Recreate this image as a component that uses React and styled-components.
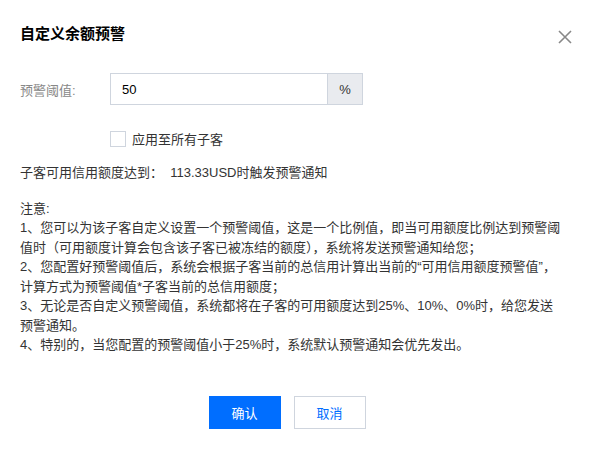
import React, { useState } from "react";
import styled, { createGlobalStyle } from "styled-components";

const GlobalStyle = createGlobalStyle`
  html, body {
    margin: 0;
    padding: 0;
    background: #fff;
  }
  body {
    font-family: "Liberation Sans", "Noto Sans CJK SC", sans-serif;
    color: #333;
  }
`;

const Dialog = styled.div`
  width: 592px;
  height: 463px;
  box-sizing: border-box;
  padding: 24px 20px 0;
  background: #fff;
`;

const Header = styled.div`
  display: flex;
  justify-content: space-between;
  align-items: flex-start;
`;

const Title = styled.h3`
  margin: 0;
  font-size: 15px;
  line-height: 20px;
  font-weight: 700;
  color: #000;
`;

const CloseButton = styled.button`
  margin: 6px 0 0 0;
  padding: 0;
  border: 0;
  background: none;
  width: 14px;
  height: 14px;
  display: flex;
  cursor: pointer;
`;

const FormRow = styled.div`
  display: flex;
  align-items: center;
  margin-top: 29px;
`;

const Label = styled.label`
  width: 90px;
  font-size: 13px;
  color: #888;
`;

const InputGroup = styled.div`
  display: flex;
  width: 253px;
  height: 32px;
  box-sizing: border-box;
  border: 1px solid #cfd5de;
`;

const Input = styled.input`
  flex: 1;
  min-width: 0;
  border: 0;
  outline: none;
  padding: 0 11px;
  font-family: inherit;
  font-size: 13px;
  color: #000;
  background: #fff;
`;

const Addon = styled.span`
  width: 34px;
  border-left: 1px solid #cfd5de;
  background: #e9ebef;
  display: flex;
  align-items: center;
  justify-content: center;
  font-size: 13px;
  color: #333;
`;

const CheckRow = styled.label`
  display: flex;
  align-items: center;
  gap: 6px;
  margin: 25px 0 0 90px;
  height: 17px;
  font-size: 13px;
  color: #333;
  cursor: pointer;
`;

const Box = styled.span`
  width: 16px;
  height: 16px;
  box-sizing: border-box;
  border: 1px solid ${(p) => (p.checked ? "#006eff" : "#cfd5de")};
  background: ${(p) => (p.checked ? "#006eff" : "#fff")};
`;

const Summary = styled.p`
  margin: 16px 0 0;
  font-size: 13px;
  line-height: 19.5px;
  color: #333;
  white-space: pre;
`;

const Notes = styled.div`
  margin-top: 16px;
  font-size: 13px;
  line-height: 19.5px;
  color: #333;
  white-space: nowrap;

  p {
    margin: 0;
  }
`;

const Footer = styled.div`
  display: flex;
  justify-content: center;
  gap: 13px;
  margin-top: 41px;
  padding-right: 18px;
`;

const Button = styled.button`
  width: 72px;
  height: 33px;
  box-sizing: border-box;
  font-family: inherit;
  font-size: 13px;
  border: 1px solid ${(p) => (p.primary ? "#006eff" : "#cfd5de")};
  background: ${(p) => (p.primary ? "#006eff" : "#fff")};
  color: ${(p) => (p.primary ? "#fff" : "#006eff")};
  cursor: pointer;
`;

const CloseIcon = () => (
  <svg width="14" height="14" viewBox="0 0 14 14">
    <path d="M1 1 L13 13 M13 1 L1 13" stroke="#888" strokeWidth="1.6" fill="none" />
  </svg>
);

const App = () => {
  const [value, setValue] = useState("50");
  const [applyAll, setApplyAll] = useState(false);

  return (
    <Dialog>
      <GlobalStyle />
      <Header>
        <Title>自定义余额预警</Title>
        <CloseButton aria-label="关闭">
          <CloseIcon />
        </CloseButton>
      </Header>

      <FormRow>
        <Label>预警阈值:</Label>
        <InputGroup>
          <Input value={value} onChange={(e) => setValue(e.target.value)} />
          <Addon>%</Addon>
        </InputGroup>
      </FormRow>

      <CheckRow onClick={() => setApplyAll(!applyAll)}>
        <Box checked={applyAll} />
        应用至所有子客
      </CheckRow>

      <Summary>{"子客可用信用额度达到：  113.33USD时触发预警通知"}</Summary>

      <Notes>
        <p>注意:</p>
        <p>
          1、您可以为该子客自定义设置一个预警阈值，这是一个比例值，即当可用额度比例达到预警阈
          <br />
          值时（可用额度计算会包含该子客已被冻结的额度），系统将发送预警通知给您；
        </p>
        <p>
          2、您配置好预警阈值后，系统会根据子客当前的总信用计算出当前的“可用信用额度预警值”，
          <br />
          计算方式为预警阈值*子客当前的总信用额度；
        </p>
        <p>
          3、无论是否自定义预警阈值，系统都将在子客的可用额度达到25%、10%、0%时，给您发送
          <br />
          预警通知。
        </p>
        <p>4、特别的，当您配置的预警阈值小于25%时，系统默认预警通知会优先发出。</p>
      </Notes>

      <Footer>
        <Button primary>确认</Button>
        <Button>取消</Button>
      </Footer>
    </Dialog>
  );
};

export default App;
